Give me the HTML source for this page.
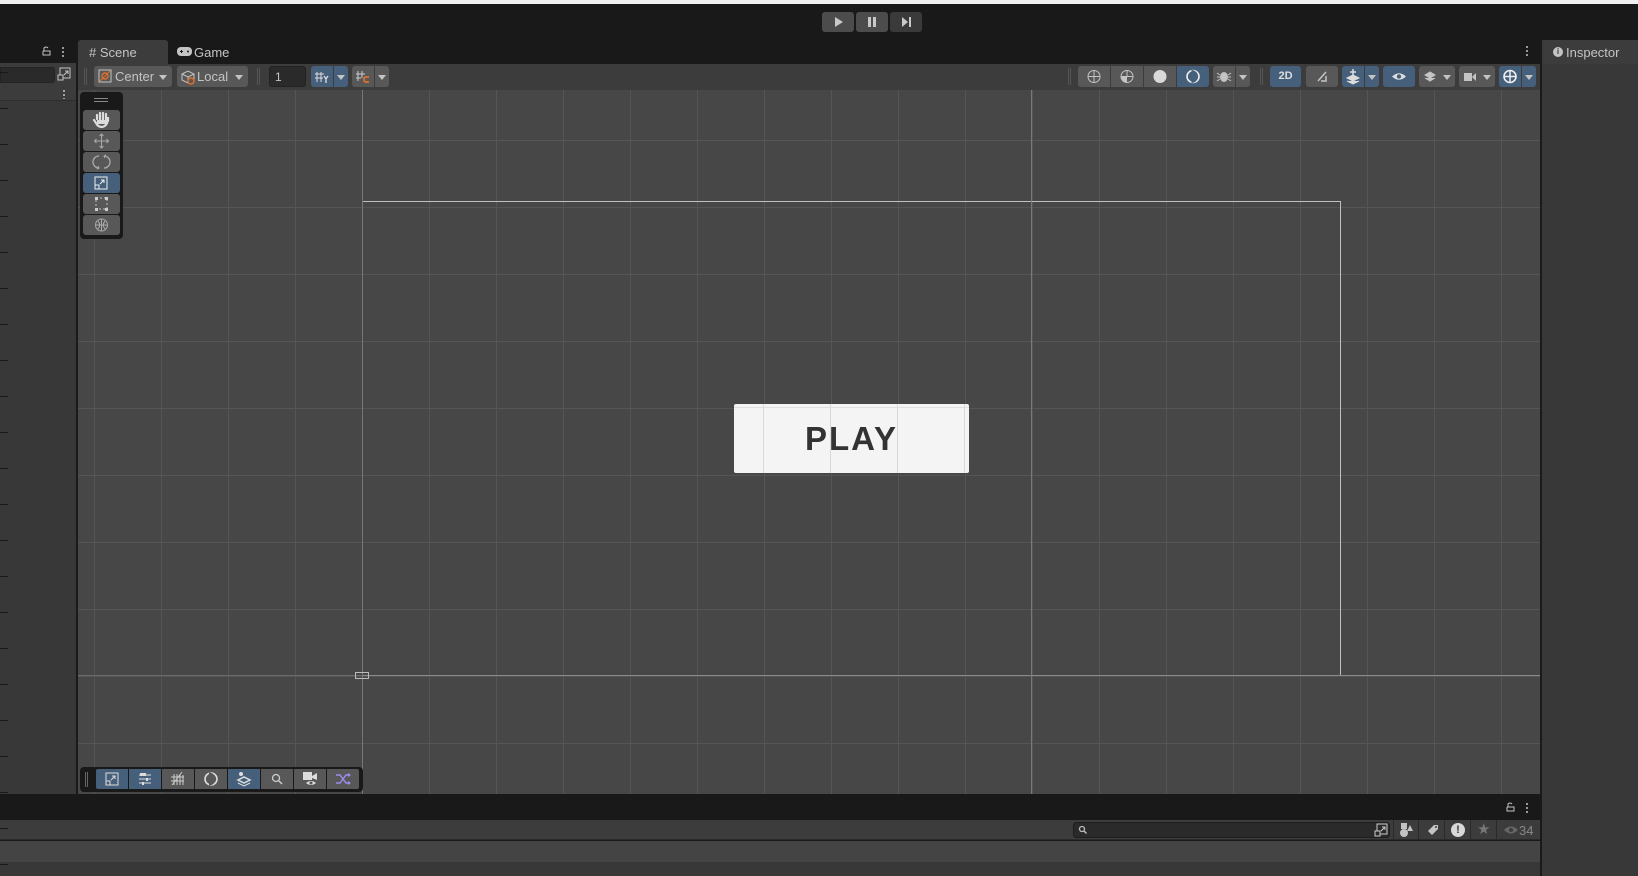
<!DOCTYPE html>
<html><head><meta charset="utf-8"><style>
*{margin:0;padding:0;box-sizing:border-box}
body{width:1638px;height:876px;background:#191919;position:relative;overflow:hidden;font-family:"Liberation Sans",sans-serif;font-size:12px;color:#c4c4c4}
.a{position:absolute}
.btn{position:absolute;background:#585858;border-radius:3px}
.blue{background:#46607c}
.dd::after{content:"";position:absolute;left:50%;top:50%;margin:-2px 0 0 -4px;border:4px solid transparent;border-top:5px solid #c4c4c4;border-bottom:0}
svg{position:absolute}
</style></head><body>
<div class="a" style="left:0;top:0;width:1638px;height:4px;background:#f0f0f0"></div>
<!-- play controls -->
<div class="btn" style="left:822px;top:12px;width:32px;height:20px;background:#4c4c4c"><svg width="32" height="20"><path d="M13 5 L21 10 L13 15Z" fill="#c8c8c8"/></svg></div>
<div class="btn" style="left:856px;top:12px;width:32px;height:20px;background:#4c4c4c"><svg width="32" height="20"><rect x="12" y="5" width="3" height="10" fill="#c8c8c8"/><rect x="17" y="5" width="3" height="10" fill="#c8c8c8"/></svg></div>
<div class="btn" style="left:890px;top:12px;width:32px;height:20px;background:#3a3a3a"><svg width="32" height="20"><path d="M12 5 L18 10 L12 15Z" fill="#c8c8c8"/><rect x="19" y="5" width="2" height="10" fill="#c8c8c8"/></svg></div>

<!-- left panel -->
<div class="a" style="left:0;top:63px;width:76px;height:731px;background:#383838"></div>
<div class="a" style="left:0;top:63px;width:76px;height:25px;background:#3c3c3c"></div>
<div class="a" style="left:0;top:67px;width:55px;height:16px;background:#2a2a2a;border-radius:0 3px 3px 0;border:1px solid #232323"></div>
<svg style="left:57px;top:66px" width="16" height="16"><rect x="3" y="2" width="10" height="10" fill="none" stroke="#c4c4c4"/><rect x="1" y="9" width="5" height="5" fill="#3c3c3c" stroke="#c4c4c4"/><path d="M7 9 L11 5 M8 5 H11 V8" stroke="#c4c4c4" fill="none"/></svg>
<div class="a" style="left:0;top:88px;width:76px;height:13px;background:#3c3c3c;border-bottom:1px solid #2e2e2e"></div>
<div class="a" style="left:63px;top:89px;width:2px;height:10px;background:radial-gradient(circle,#c4c4c4 1px,transparent 1px) 0 0/2px 4px"></div>
<svg style="left:40px;top:45px" width="12" height="12"><path d="M3 6 V10 H10 V6 H3 M4 6 V3 Q6 1 8 3" stroke="#c4c4c4" fill="none"/></svg>
<div class="a" style="left:62px;top:46px;width:2px;height:11px;background:radial-gradient(circle,#c4c4c4 1px,transparent 1px) 0 0/2px 4px"></div>
<div class="a" style="left:0;top:36px;width:8px;height:760px;background:repeating-linear-gradient(#191919 0 1px,transparent 1px 36px)"></div>
<div class="a" style="left:76px;top:40px;width:2px;height:754px;background:#1a1a1a"></div>

<!-- tabs -->
<div class="a" style="left:78px;top:40px;width:90px;height:24px;background:#3c3c3c;border-radius:3px 3px 0 0"></div>
<div class="a" style="left:89px;top:45px;font-size:13px;color:#c4c4c4">#&nbsp;Scene</div>
<svg style="left:177px;top:47px" width="15" height="9"><rect x="0" y="0" width="15" height="9" rx="4" fill="#c4c4c4"/><path d="M3 4.5H6M4.5 3V6" stroke="#191919"/><circle cx="11" cy="4.5" r="1" fill="#191919"/></svg>
<div class="a" style="left:194px;top:45px;font-size:13px;color:#c4c4c4">Game</div>
<div class="a" style="left:1526px;top:45px;width:2px;height:11px;background:radial-gradient(circle,#c4c4c4 1px,transparent 1px) 0 0/2px 4px"></div>

<!-- toolbar -->
<div class="a" style="left:78px;top:64px;width:1462px;height:26px;background:#3c3c3c"></div>
<div class="a" style="left:84px;top:68px;width:3px;height:17px;border-left:1px solid #555;border-right:1px solid #555"></div>
<div class="btn" style="left:94px;top:66px;width:78px;height:21px"><svg style="left:4px;top:3px" width="15" height="15"><rect x="1" y="1" width="12" height="12" fill="none" stroke="#c4c4c4"/><circle cx="7" cy="7" r="3" fill="none" stroke="#e0702c" stroke-width="1.5"/><path d="M2 12 L12 2" stroke="#e0702c"/></svg><span class="a" style="left:21px;top:3px;font-size:13px">Center</span><span class="a dd" style="left:62px;top:0;width:14px;height:21px"></span></div>
<div class="btn" style="left:177px;top:66px;width:71px;height:21px"><svg style="left:3px;top:3px" width="16" height="16"><path d="M2 5 L8 2 L14 5 V11 L8 14 L2 11Z M2 5 L8 8 L14 5 M8 8 V14" fill="none" stroke="#c4c4c4"/><circle cx="11" cy="12" r="3" fill="#585858" stroke="#e0702c" stroke-width="1.5"/></svg><span class="a" style="left:20px;top:3px;font-size:13px">Local</span><span class="a dd" style="left:55px;top:0;width:14px;height:21px"></span></div>
<div class="a" style="left:257px;top:68px;width:3px;height:17px;border-left:1px solid #555;border-right:1px solid #555"></div>
<div class="a" style="left:269px;top:66px;width:37px;height:21px;background:#2a2a2a;border-radius:3px;border:1px solid #222;padding:3px 5px;font-size:12px">1</div>
<div class="btn blue" style="left:311px;top:66px;width:22px;height:21px;border-radius:3px 0 0 3px"><svg width="22" height="21"><path d="M6 6V16M10 6V16M4 8H13M4 12H12" stroke="#ddd"/><path d="M13 10L15 13L17 10M15 13V17" stroke="#ddd" fill="none" stroke-width="1.3"/></svg></div>
<div class="btn blue dd" style="left:334px;top:66px;width:14px;height:21px;border-radius:0 3px 3px 0"></div>
<div class="btn" style="left:352px;top:66px;width:22px;height:21px;border-radius:3px 0 0 3px"><svg width="22" height="21"><path d="M6 5V15M10 5V12M4 8H13M4 12H9" stroke="#ccc"/><path d="M17 11H14Q12 11 12 13.5Q12 16 14 16H17" stroke="#e0702c" fill="none" stroke-width="1.8"/></svg></div>
<div class="btn dd" style="left:375px;top:66px;width:14px;height:21px;border-radius:0 3px 3px 0"></div>

<!-- right toolbar -->
<div class="a" style="left:1068px;top:68px;width:3px;height:17px;border-left:1px solid #555;border-right:1px solid #555"></div>
<div class="btn" style="left:1078px;top:66px;width:32px;height:21px;border-radius:3px 0 0 3px"><svg width="32" height="21"><circle cx="16" cy="10.5" r="6" fill="none" stroke="#c4c4c4"/><path d="M10 10.5H22M16 4.5V16.5" stroke="#c4c4c4"/></svg></div>
<div class="btn" style="left:1111px;top:66px;width:32px;height:21px;border-radius:0"><svg width="32" height="21"><circle cx="16" cy="10.5" r="6" fill="none" stroke="#c4c4c4"/><path d="M10 10.5H22M16 4.5V10.5" stroke="#c4c4c4"/><path d="M10.5 11 A6 6 0 0 0 16 16.5 V11Z" fill="#c4c4c4"/></svg></div>
<div class="btn" style="left:1144px;top:66px;width:32px;height:21px;border-radius:0"><svg width="32" height="21"><circle cx="16" cy="10.5" r="6.5" fill="#d8d8d8"/></svg></div>
<div class="btn blue" style="left:1177px;top:66px;width:32px;height:21px;border-radius:0 3px 3px 0"><svg width="32" height="21"><circle cx="16" cy="10.5" r="6" fill="none" stroke="#eee" stroke-width="1.6"/><path d="M14.5 5 A5 5 0 0 1 14.5 16" stroke="#46607c" fill="none" stroke-width="2"/></svg></div>
<div class="btn" style="left:1213px;top:66px;width:22px;height:21px;border-radius:3px 0 0 3px"><svg width="22" height="21"><ellipse cx="11" cy="11" rx="4" ry="5" fill="#c4c4c4"/><path d="M4 7L7 9M18 7L15 9M4 11H7M15 11H18M4 15L7 13M18 15L15 13" stroke="#c4c4c4"/></svg></div>
<div class="btn dd" style="left:1236px;top:66px;width:14px;height:21px;border-radius:0 3px 3px 0"></div>
<div class="a" style="left:1260px;top:68px;width:3px;height:17px;border-left:1px solid #555;border-right:1px solid #555"></div>
<div class="btn blue" style="left:1270px;top:66px;width:31px;height:21px;text-align:center;line-height:21px;font-size:11px;font-weight:bold;color:#ddd">2D</div>
<div class="btn" style="left:1306px;top:66px;width:32px;height:21px"><svg width="32" height="21"><path d="M12 15 L20 6 M15 15 H20 V10" stroke="#c4c4c4" fill="none" stroke-width="1.5"/></svg></div>
<div class="btn blue" style="left:1342px;top:66px;width:22px;height:21px;border-radius:3px 0 0 3px"><svg width="22" height="21"><path d="M5 12 L11 9 L17 12 L11 15Z M5 15 L11 18 L17 15" fill="#ddd" stroke="#ddd"/><path d="M11 3V9M8 6H14" stroke="#ddd" stroke-width="1.5"/></svg></div>
<div class="btn blue dd" style="left:1365px;top:66px;width:14px;height:21px;border-radius:0 3px 3px 0"></div>
<div class="btn blue" style="left:1383px;top:66px;width:32px;height:21px"><svg width="32" height="21"><path d="M9 10.5 Q16 4 23 10.5 Q16 17 9 10.5Z" fill="#ddd"/><circle cx="16" cy="10.5" r="2.2" fill="#46607c"/></svg></div>
<div class="btn" style="left:1419px;top:66px;width:36px;height:21px"><svg width="22" height="21"><path d="M6 9 L11 6 L16 9 L11 12Z M6 12 L11 15 L16 12" fill="#c4c4c4" stroke="#c4c4c4"/></svg><span class="a dd" style="left:21px;top:0;width:13px;height:21px"></span></div>
<div class="btn" style="left:1459px;top:66px;width:36px;height:21px"><svg width="22" height="21"><rect x="5" y="7" width="8" height="8" fill="#c4c4c4"/><path d="M13 11 L17 7 V15Z" fill="#c4c4c4"/></svg><span class="a dd" style="left:21px;top:0;width:13px;height:21px"></span></div>
<div class="btn blue" style="left:1499px;top:66px;width:22px;height:21px;border-radius:3px 0 0 3px"><svg width="22" height="21"><circle cx="11" cy="10.5" r="6" fill="none" stroke="#eee" stroke-width="1.6"/><path d="M5 10.5H17M11 4.5V16.5" stroke="#eee" stroke-width="1.5"/></svg></div>
<div class="btn blue dd" style="left:1522px;top:66px;width:14px;height:21px;border-radius:0 3px 3px 0"></div>

<!-- inspector -->
<div class="a" style="left:1540px;top:40px;width:2px;height:836px;background:#1a1a1a"></div>
<div class="a" style="left:1542px;top:40px;width:96px;height:836px;background:#383838"></div>
<div class="a" style="left:1543px;top:40px;width:95px;height:24px;background:#3c3c3c;border-radius:3px 0 0 0"></div>
<div class="a" style="left:1553px;top:47px;width:10px;height:10px;border-radius:50%;background:#c4c4c4;color:#3c3c3c;font-size:8px;font-weight:bold;text-align:center;line-height:10px">i</div>
<div class="a" style="left:1566px;top:45px;font-size:13px">Inspector</div>

<!-- scene view -->
<div class="a" style="left:78px;top:90px;width:1462px;height:704px;background-color:#474747;background-image:linear-gradient(90deg,#555 1px,transparent 1px),linear-gradient(#555 1px,transparent 1px);background-size:67px 67px;background-position:16px 50px"></div>
<div class="a" style="left:362px;top:201px;width:979px;height:475px;border:1px solid #c0c0c0;border-bottom:none"></div>
<div class="a" style="left:78px;top:675px;width:1462px;height:1px;background:#8a8a8a"></div>
<div class="a" style="left:78px;top:675px;width:284px;height:1px;background:#6a6a6a"></div>
<div class="a" style="left:362px;top:90px;width:1px;height:704px;background:#777"></div>
<div class="a" style="left:1031px;top:90px;width:1px;height:704px;background:#7a7a7a"></div>
<div class="a" style="left:355px;top:672px;width:14px;height:7px;border:1px solid #bbb"></div>
<div class="a" style="left:734px;top:404px;width:235px;height:69px;background:#f4f4f4;border-radius:2px"></div>
<div class="a" style="left:763px;top:404px;width:1px;height:69px;background:#d8d8d8"></div>
<div class="a" style="left:830px;top:404px;width:1px;height:69px;background:#d8d8d8"></div>
<div class="a" style="left:897px;top:404px;width:1px;height:69px;background:#d8d8d8"></div>
<div class="a" style="left:964px;top:404px;width:1px;height:69px;background:#d8d8d8"></div>
<div class="a" style="left:734px;top:407px;width:235px;height:1px;background:#e0e0e0"></div>
<div class="a" style="left:734px;top:404px;width:235px;height:69px;text-align:center;line-height:69px;font-size:33px;font-weight:bold;color:#333;letter-spacing:2px">PLAY</div>

<!-- tool palette -->
<div class="a" style="left:80px;top:92px;width:43px;height:147px;background:#191919;border-radius:4px"></div>
<div class="a" style="left:94px;top:98px;width:14px;height:4px;border-top:1px solid #888;border-bottom:1px solid #888"></div>
<div class="btn" style="left:83px;top:110px;width:37px;height:20px"><svg width="37" height="20"><path d="M14 9 V5 M17 10 V3 M20 10 V3 M23 10 V4 M25 11 V7 Q25 16 19 17 Q15 17 13 13 L11 10" stroke="#ddd" stroke-width="2.2" fill="none" stroke-linecap="round"/><path d="M14 10 H25 V14 H14Z" fill="#ddd"/></svg></div>
<div class="btn" style="left:83px;top:131px;width:37px;height:20px"><svg width="37" height="20"><path d="M18.5 3V17M11.5 10H25.5" stroke="#aaa"/><path d="M16.5 5L18.5 3L20.5 5M16.5 15L18.5 17L20.5 15M13.5 8L11.5 10L13.5 12M23.5 8L25.5 10L23.5 12" stroke="#aaa" fill="none"/></svg></div>
<div class="btn" style="left:83px;top:152px;width:37px;height:20px"><svg width="37" height="20"><path d="M16 4 A6 6 0 0 0 16 16 M21 16 A6 6 0 0 0 21 4" stroke="#aaa" fill="none" stroke-width="1.3"/><path d="M15 14 L16 16 L14 17M22 6L21 4L23 3" stroke="#aaa" fill="none"/></svg></div>
<div class="btn blue" style="left:83px;top:173px;width:37px;height:20px"><svg width="37" height="20"><rect x="12" y="4" width="12" height="12" fill="none" stroke="#eee"/><rect x="12" y="12" width="4" height="4" fill="none" stroke="#eee"/><path d="M17 11L21 7M18 7H21V10" stroke="#eee" fill="none"/></svg></div>
<div class="btn" style="left:83px;top:194px;width:37px;height:20px"><svg width="37" height="20"><rect x="13" y="4" width="11" height="11" fill="none" stroke="#bbb" stroke-dasharray="2 2"/><rect x="12" y="3" width="3" height="3" fill="#ccc"/><rect x="22" y="3" width="3" height="3" fill="#ccc"/><rect x="12" y="14" width="3" height="3" fill="#ccc"/><rect x="22" y="14" width="3" height="3" fill="#ccc"/></svg></div>
<div class="btn" style="left:83px;top:215px;width:37px;height:20px"><svg width="37" height="20"><circle cx="18.5" cy="10" r="6" fill="none" stroke="#aaa"/><path d="M12.5 10H24.5M18.5 4V16M15 6 Q18.5 10 15 14M22 6 Q18.5 10 22 14" stroke="#aaa" fill="none"/></svg></div>

<!-- bottom overlay toolbar -->
<div class="a" style="left:80px;top:767px;width:283px;height:25px;background:#191919;border-radius:4px"></div>
<div class="a" style="left:85px;top:772px;width:3px;height:15px;border-left:1px solid #666;border-right:1px solid #666"></div>
<div class="btn blue" style="left:96px;top:769px;width:32px;height:20px;border-radius:2px 0 0 2px"><svg width="32" height="20"><rect x="10" y="4" width="12" height="12" fill="none" stroke="#ddd"/><rect x="10" y="12" width="4" height="4" fill="none" stroke="#ddd"/><path d="M15 11L19 7M16 7H19V10" stroke="#ddd" fill="none"/></svg></div>
<div class="btn blue" style="left:129px;top:769px;width:32px;height:20px;border-radius:0"><svg width="32" height="20"><rect x="11" y="4" width="6" height="3" fill="#ddd"/><path d="M10 6H22M10 10H22M10 14H22" stroke="#ddd"/><rect x="17" y="9" width="2" height="3" fill="#ddd"/><rect x="13" y="13" width="2" height="3" fill="#ddd"/></svg></div>
<div class="btn" style="left:162px;top:769px;width:32px;height:20px;border-radius:0"><svg width="32" height="20"><path d="M9 8H22M9 12H22M12 5V16M15 5V16M18 6V16M21 6V16M10 16L20 3" stroke="#ccc"/></svg></div>
<div class="btn" style="left:195px;top:769px;width:32px;height:20px;border-radius:0"><svg width="32" height="20"><circle cx="16" cy="10" r="6" fill="none" stroke="#ddd" stroke-width="1.6"/><path d="M14 4.5 A5 5 0 0 1 14 15.5" stroke="#585858" fill="none" stroke-width="2"/></svg></div>
<div class="btn blue" style="left:228px;top:769px;width:32px;height:20px;border-radius:0"><svg width="32" height="20"><circle cx="13" cy="5" r="2" fill="#ddd"/><path d="M10 11L16 8L22 11L16 14Z" fill="none" stroke="#ddd" stroke-width="1.5"/><path d="M10 14L16 17L22 14" stroke="#ddd" fill="none"/></svg></div>
<div class="btn" style="left:261px;top:769px;width:32px;height:20px;border-radius:0"><svg width="32" height="20"><circle cx="15" cy="9" r="3.5" fill="none" stroke="#ccc" stroke-width="1.3"/><path d="M17.5 11.5L21 15" stroke="#ccc" stroke-width="1.5"/></svg></div>
<div class="btn" style="left:294px;top:769px;width:32px;height:20px;border-radius:0"><svg width="32" height="20"><rect x="9" y="3" width="9" height="8" fill="#ddd"/><path d="M18 7L23 4V11L18 9Z" fill="#ddd"/><path d="M12 14 Q17 10 22 14 Q17 18 12 14Z" fill="#ddd"/><circle cx="17" cy="14" r="1.5" fill="#585858"/></svg></div>
<div class="btn" style="left:327px;top:769px;width:32px;height:20px;border-radius:0 2px 2px 0"><svg width="32" height="20"><path d="M9 6H13L19 14H23M9 14H13L19 6H23" stroke="#9b8cf0" fill="none" stroke-width="1.4"/><path d="M21 4L24 6L21 8M21 12L24 14L21 16" fill="#9b8cf0"/></svg></div>

<!-- bottom console -->
<div class="a" style="left:0;top:794px;width:1540px;height:26px;background:#191919"></div>
<svg style="left:1504px;top:801px" width="12" height="12"><path d="M3 6 V10 H10 V6 H3 M4 6 V3 Q6 1 8 3" stroke="#c4c4c4" fill="none"/></svg>
<div class="a" style="left:1526px;top:802px;width:2px;height:11px;background:radial-gradient(circle,#c4c4c4 1px,transparent 1px) 0 0/2px 4px"></div>
<div class="a" style="left:0;top:820px;width:1540px;height:20px;background:#3c3c3c;border-bottom:1px solid #2a2a2a"></div>
<div class="a" style="left:1073px;top:822px;width:317px;height:16px;background:#2a2a2a;border:1px solid #1e1e1e;border-radius:3px"></div>
<svg style="left:1078px;top:825px" width="10" height="10"><circle cx="4" cy="4" r="2.5" fill="none" stroke="#bbb" stroke-width="1.3"/><path d="M6 6L8.5 8.5" stroke="#bbb" stroke-width="1.5"/></svg>
<svg style="left:1374px;top:823px" width="14" height="14"><rect x="3" y="1" width="10" height="10" fill="none" stroke="#ccc"/><rect x="1" y="8" width="5" height="5" fill="#2a2a2a" stroke="#ccc"/><path d="M7 8L11 4M8 4H11V7" stroke="#ccc" fill="none"/></svg>
<div class="a" style="left:1393px;top:820px;width:1px;height:20px;background:#2a2a2a"></div>
<svg style="left:1398px;top:822px" width="20" height="16"><rect x="3" y="1" width="6" height="6" fill="#c4c4c4"/><circle cx="6" cy="11" r="4" fill="#c4c4c4"/><path d="M9 9L12 3L15 9Z" fill="#c4c4c4"/></svg>
<div class="a" style="left:1418px;top:820px;width:1px;height:20px;background:#2a2a2a"></div>
<svg style="left:1423px;top:822px" width="20" height="16"><path d="M5 9L11 3H15V7L9 13Z" fill="#c4c4c4"/><circle cx="13" cy="5" r="1" fill="#3c3c3c"/></svg>
<div class="a" style="left:1444px;top:820px;width:1px;height:20px;background:#2a2a2a"></div>
<div class="a" style="left:1451px;top:823px;width:14px;height:14px;border-radius:50%;background:#d8d8d8;color:#3c3c3c;font-size:11px;font-weight:bold;text-align:center;line-height:14px">!</div>
<div class="a" style="left:1470px;top:820px;width:1px;height:20px;background:#2a2a2a"></div>
<div class="a" style="left:1477px;top:820px;font-size:15px;color:#777">★</div>
<div class="a" style="left:1496px;top:820px;width:1px;height:20px;background:#2a2a2a"></div>
<svg style="left:1503px;top:824px" width="16" height="12"><path d="M1 6 Q8 -1 15 6 Q8 13 1 6Z" fill="#666"/><circle cx="8" cy="6" r="2" fill="#3c3c3c"/></svg>
<div class="a" style="left:1519px;top:823px;font-size:13px;color:#888">34</div>
<div class="a" style="left:0;top:841px;width:1540px;height:21px;background:#444"></div>
<div class="a" style="left:0;top:862px;width:1540px;height:14px;background:#383838"></div>
<div class="a" style="left:0;top:828px;width:8px;height:1px;background:#191919"></div>
<div class="a" style="left:0;top:864px;width:8px;height:1px;background:#191919"></div>
</body></html>
